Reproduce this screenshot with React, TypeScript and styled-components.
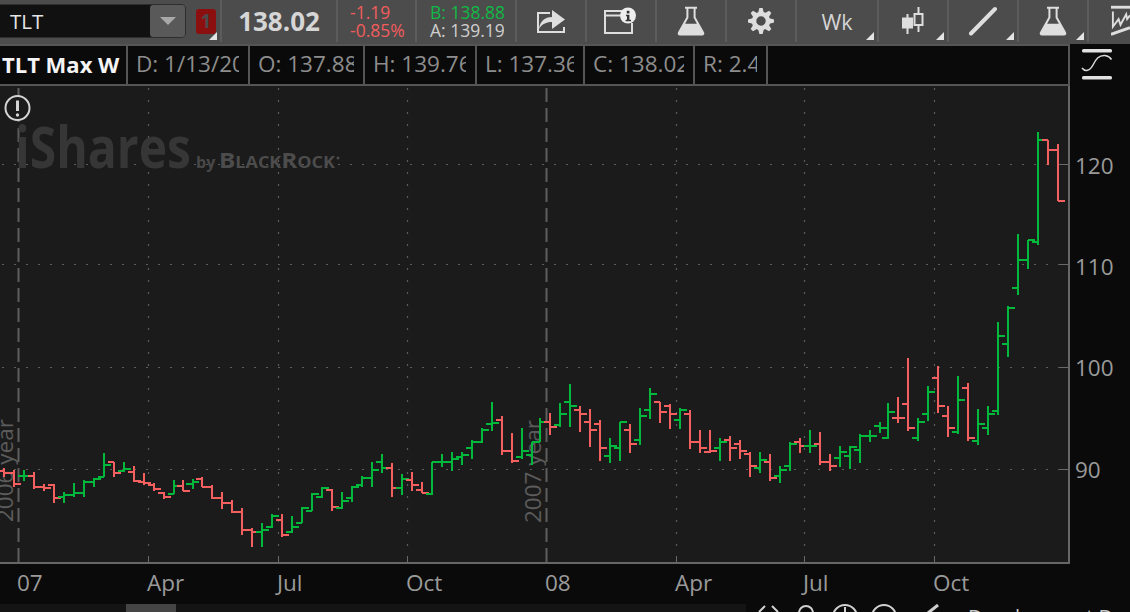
import React from 'react'
import styled, { createGlobalStyle } from 'styled-components'

const GlobalStyle = createGlobalStyle`
  html, body {
    margin: 0;
    padding: 0;
    width: 1130px;
    height: 612px;
    overflow: hidden;
    background: #0a0a0a;
    font-family: 'Open Sans', 'Noto Sans', sans-serif;
  }
`

const Page = styled.div`
  width: 1130px;
  height: 612px;
  display: flex;
  flex-direction: column;
  overflow: hidden;
`

const Toolbar = styled.div`
  height: 44px;
  flex: none;
  display: flex;
  background: #4c4c4c;
  color: #dcdcdc;
`

const ToolCell = styled.div<{ $w: number }>`
  position: relative;
  width: ${({ $w }) => $w}px;
  height: 42px;
  flex: none;
  box-sizing: border-box;
  border-right: 2px solid #5c5c5c;
  display: flex;
  align-items: center;
  justify-content: center;
  overflow: hidden;
`

const LastCell = styled(ToolCell)`
  border-right: none;
  justify-content: flex-start;
  padding-left: 22px;
`

const SymbolCell = styled(ToolCell)`
  justify-content: flex-start;
`

const SymbolBox = styled.div`
  width: 186px;
  height: 34px;
  box-sizing: border-box;
  background: #111;
  border: 1px solid #2e2e2e;
  border-left: none;
  border-radius: 0 5px 5px 0;
  display: flex;
  align-items: center;
  justify-content: space-between;
  padding-left: 10px;
  font-size: 20.5px;
  color: #e4e4e4;
`

const DropButton = styled.div`
  width: 35px;
  height: 32px;
  background: #595959;
  border-radius: 3px;
  display: flex;
  align-items: center;
  justify-content: center;
  &::after {
    content: '';
    border-left: 8px solid transparent;
    border-right: 8px solid transparent;
    border-top: 8px solid #a8a8a8;
  }
`

const AlertBadge = styled.div`
  width: 20px;
  height: 25px;
  margin-left: 10px;
  background: #8c0f0f;
  border-radius: 3px;
  color: #4a4a4a;
  font-size: 19px;
  font-weight: 700;
  line-height: 25px;
  text-align: center;
`

const Corner = styled.span`
  position: absolute;
  right: 3px;
  bottom: 2px;
  width: 0;
  height: 0;
  border-left: 8px solid transparent;
  border-bottom: 8px solid #e4e4e4;
`

const LastPrice = styled.div`
  font-size: 26px;
  font-weight: 700;
  color: #d6d6d6;
`

const QuoteStack = styled.div`
  display: flex;
  flex-direction: column;
  font-size: 17.5px;
  line-height: 18px;
  width: 100%;
  box-sizing: border-box;
  overflow: hidden;
  white-space: nowrap;
`

const ChangeStack = styled(QuoteStack)`
  padding-left: 12px;
  color: #f25c5c;
`

const BidStack = styled(QuoteStack)`
  padding-left: 13px;
  width: 87px;
  align-self: center;
  margin-right: auto;
`

const QuoteLine = styled.span<{ $color: string }>`
  color: ${({ $color }) => $color};
`

const PeriodLabel = styled.span`
  font-size: 21.5px;
  color: #d4d4d4;
`

const InfoRow = styled.div`
  height: 42px;
  flex: none;
  display: flex;
`

const InfoCells = styled.div`
  width: 1070px;
  box-sizing: border-box;
  display: flex;
  background: #0a0a0a;
  border-top: 2px solid #555;
  border-bottom: 2px solid #555;
  border-right: 2px solid #555;
`

const InfoCell = styled.div<{ $w: number; $title?: boolean }>`
  width: ${({ $w }) => $w}px;
  flex: none;
  box-sizing: border-box;
  border-right: 2px solid #555;
  padding: 0 ${({ $title }) => ($title ? 0 : 9)}px 0 ${({ $title }) => ($title ? 2 : 8)}px;
  font-size: ${({ $title }) => ($title ? 22 : 22.5)}px;
  font-weight: ${({ $title }) => ($title ? 700 : 400)};
  color: ${({ $title }) => ($title ? '#f4f4f4' : '#8d8d8d')};
  line-height: 36px;
  white-space: nowrap;
  overflow: hidden;
`

const ClippedValue = styled.span`
  display: block;
  overflow: hidden;
`

const StudyButton = styled.div`
  flex: 1;
  background: #0a0a0a;
  display: flex;
  align-items: center;
  justify-content: center;
  padding-right: 6px;
`

const ChartRow = styled.div`
  height: 478px;
  flex: none;
  display: flex;
`

const Plot = styled.svg`
  width: 1070px;
  height: 478px;
  flex: none;
  display: block;
  background: #1b1b1b;
`

const PriceAxis = styled.div`
  flex: 1;
  background: #0a0a0a;
  box-sizing: border-box;
  padding: 28.5px 0 0 5px;
  display: flex;
  flex-direction: column;
`

const PriceLabel = styled.div`
  height: 101.4px;
  flex: none;
  line-height: 101.4px;
  font-size: 22.5px;
  color: #9a9a9a;
`

const TimeAxis = styled.div`
  height: 40px;
  flex: none;
  display: flex;
  background: #0a0a0a;
  padding-left: 17px;
`

const TimeLabel = styled.div<{ $w: number }>`
  width: ${({ $w }) => $w}px;
  flex: none;
  font-size: 22.5px;
  line-height: 37px;
  color: #9a9a9a;
`

const BottomBar = styled.div`
  height: 8px;
  flex: none;
  display: flex;
  overflow: hidden;
  background: #0a0a0a;
`

const ScrollTrack = styled.div`
  width: 746px;
  flex: none;
  background: #141414;
  padding-left: 126px;
  box-sizing: border-box;
`

const ScrollThumb = styled.div`
  width: 50px;
  height: 8px;
  background: #454545;
`

const ToolIcons = styled.svg`
  width: 222px;
  height: 20px;
  flex: none;
  display: block;
`

const StatusText = styled.div`
  font-size: 20px;
  line-height: 26px;
  color: #c8c8c8;
  white-space: nowrap;
`

// bars read off the chart: [x, high, low, open, close, up] in crop coords (3x)
type Bar = [number, number, number, number, number, number]

const left: Bar[] = [
  [13, 85, 110, 92, 100, 0], [43, 90, 140, 100, 132, 0], [73, 90, 122, 108, 108, 1], [103, 95, 148, 108, 140, 0],
  [133, 132, 152, 140, 145, 0], [163, 132, 188, 135, 175, 0], [193, 155, 188, 170, 165, 1], [223, 130, 170, 165, 158, 1],
  [253, 120, 172, 158, 125, 1], [283, 115, 140, 125, 118, 1], [313, 40, 110, 110, 75, 1], [343, 65, 110, 67, 100, 0],
  [373, 65, 95, 92, 88, 1], [403, 78, 125, 95, 122, 0], [433, 100, 135, 125, 130, 0], [463, 130, 152, 135, 148, 0],
  [493, 155, 178, 160, 170, 0], [523, 120, 162, 162, 138, 1], [549, 120, 152, 138, 152, 0], [578, 118, 148, 132, 125, 1],
  [607, 112, 140, 118, 140, 0], [637, 135, 178, 140, 175, 0], [667, 155, 208, 175, 190, 0], [697, 180, 218, 190, 215, 0],
  [727, 205, 285, 215, 270, 0], [757, 265, 322, 270, 275, 0], [787, 250, 322, 275, 270, 1], [817, 222, 265, 262, 228, 1],
  [847, 222, 290, 240, 285, 0], [877, 228, 278, 275, 262, 1],
]

const middle: Bar[] = [
  [7, 380, 428, 428, 385, 1], [37, 338, 392, 392, 342, 1], [67, 322, 355, 350, 325, 1], [97, 328, 393, 330, 380, 0],
  [127, 335, 387, 385, 362, 1], [157, 318, 365, 355, 320, 1], [187, 288, 320, 315, 295, 1], [217, 245, 322, 295, 270, 1],
  [247, 222, 280, 245, 265, 1], [277, 250, 352, 265, 325, 0], [307, 282, 346, 325, 298, 1], [337, 275, 332, 300, 315, 0],
  [367, 305, 340, 330, 338, 0], [397, 245, 345, 342, 245, 1], [427, 222, 262, 247, 247, 1], [457, 215, 273, 247, 237, 1],
  [487, 215, 255, 230, 225, 1], [517, 180, 238, 205, 187, 1], [547, 143, 188, 187, 150, 1], [577, 65, 153, 132, 128, 1],
  [607, 108, 225, 120, 212, 0], [637, 160, 250, 212, 242, 0], [667, 143, 238, 232, 212, 1], [697, 185, 255, 225, 187, 1],
  [721, 113, 185, 185, 127, 1], [751, 100, 165, 127, 140, 0], [781, 70, 142, 135, 102, 1], [811, 12, 142, 67, 78, 1],
  [841, 77, 155, 90, 103, 0],
]

const later: Bar[] = [
  [1, 88, 202, 127, 150, 0], [31, 120, 243, 133, 205, 0], [61, 173, 248, 228, 198, 1], [91, 125, 243, 205, 127, 1],
  [121, 132, 220, 150, 192, 0], [151, 83, 195, 180, 108, 1], [181, 23, 118, 90, 43, 1], [211, 65, 130, 67, 97, 0],
  [241, 72, 148, 78, 103, 0], [271, 85, 148, 120, 90, 1], [301, 90, 208, 102, 187, 0], [331, 150, 220, 187, 205, 0],
  [361, 150, 220, 217, 212, 0], [391, 173, 243, 205, 187, 1], [421, 168, 243, 180, 205, 0], [451, 180, 238, 192, 212, 0],
  [481, 215, 292, 223, 258, 0], [511, 215, 280, 265, 240, 1], [541, 222, 303, 247, 295, 0], [571, 258, 310, 288, 270, 1],
  [601, 185, 273, 258, 192, 1], [631, 173, 220, 187, 198, 0], [661, 150, 220, 198, 198, 1], [691, 155, 255, 192, 247, 0],
  [721, 222, 273, 247, 258, 0], [751, 198, 262, 235, 217, 1], [781, 198, 268, 228, 200, 1], [811, 162, 250, 210, 168, 1],
  [841, 150, 185, 168, 168, 1], [871, 125, 160, 138, 145, 1],
]

const last: Bar[] = [
  [25, 850, 958, 955, 877, 1], [55, 832, 908, 895, 895, 0], [85, 713, 932, 853, 925, 0], [115, 893, 963, 955, 907, 1],
  [145, 797, 903, 883, 817, 1], [175, 737, 880, 775, 858, 0], [205, 857, 950, 888, 925, 0], [235, 767, 943, 937, 840, 1],
  [265, 790, 962, 805, 955, 0], [295, 868, 975, 962, 912, 1], [325, 857, 945, 925, 882, 1], [355, 605, 885, 872, 649, 1],
  [385, 558, 712, 673, 565, 1], [415, 342, 525, 505, 421, 1], [445, 360, 447, 420, 360, 1], [475, 35, 375, 367, 61, 1],
  [505, 60, 135, 61, 91, 0], [535, 72, 242, 91, 242, 0],
]

const toScreen = (bars: Bar[], ox: number, oy: number): Bar[] =>
  bars.map(([x, hi, lo, o, c, up]) => [ox + x / 3, oy + hi / 3, oy + lo / 3, oy + o / 3, oy + c / 3, up])

const allBars = [
  ...toScreen(left, 0, 440),
  ...toScreen(middle, 300, 380),
  ...toScreen(later, 590, 380),
  ...toScreen(last, 880, 120),
]

const PriceBars = () => (
  <g strokeWidth={2} fill="none" shapeRendering="crispEdges">
    {allBars.map(([x, hi, lo, o, c, up]) => (
      <path
        key={x}
        stroke={up ? '#00b93c' : '#f45f5f'}
        d={`M${x} ${hi}V${lo}M${x - 6.5} ${o}H${x}M${x} ${c}H${x + 6.5}`}
      />
    ))}
  </g>
)

const Flask = () => (
  <svg width="28" height="30" viewBox="0 0 28 30" fill="#dedede">
    <path d="M8 0.8h12v2h-1.4v8.4L27 26.2c.9 1.8-.2 3.3-2 3.3H3c-1.8 0-2.9-1.5-2-3.3l8.4-15V2.800H8z" />
    <path fill="#4c4c4c" d="M11.400 2.800h5.200v9l3.300 6H8.100l3.300-6z" />
  </svg>
)

const ShareIcon = () => (
  <svg width="31" height="26" viewBox="0 0 31 26" fill="none">
    <path d="M14 5H2v19h26v-5" stroke="#dedede" strokeWidth="2" />
    <path d="M3 21c1-8 6-12 13-12V2l13 9.500-13 9.500v-7c-6 0-10 2-13 7z" fill="#dedede" />
  </svg>
)

const InfoBoxIcon = () => (
  <svg width="36" height="28" viewBox="0 0 36 28" fill="none">
    <path d="M20 4H2v22h27v-10" stroke="#dedede" strokeWidth="2" />
    <path d="M2 8.500h16" stroke="#dedede" strokeWidth="2" />
    <circle cx="25" cy="8.500" r="8" fill="#eee" />
    <rect x="23.800" y="3.800" width="2.600" height="2.600" fill="#333" />
    <path d="M23 7.800h3.400v5H28v1.500h-5.400v-1.500h1.400V9.300H23z" fill="#333" />
  </svg>
)

const GearIcon = () => (
  <svg width="28" height="28" viewBox="0 0 28 28">
    <circle cx="14" cy="14" r="7" fill="none" stroke="#dedede" strokeWidth="4.500" />
    {[0, 45, 90, 135, 180, 225, 270, 315].map(a => (
      <path key={a} d="M11 6.500L12.400 1h3.200L17 6.500z" fill="#dedede" transform={`rotate(${a} 14 14)`} />
    ))}
  </svg>
)

const CandleIcon = () => (
  <svg width="22" height="28" viewBox="0 0 22 28" fill="none" stroke="#dedede">
    <path d="M5.500 7v20M16.500 0v25" strokeWidth="2" />
    <rect x="0.500" y="11" width="10" height="10" fill="#dedede" />
    <rect x="12.500" y="7" width="8" height="11" fill="#4c4c4c" strokeWidth="2" />
  </svg>
)

const LineIcon = () => (
  <svg width="30" height="30" viewBox="0 0 30 30">
    <path d="M3 27.500L27 3" stroke="#dedede" strokeWidth="4" strokeLinecap="round" />
  </svg>
)

const PatternIcon = () => (
  <svg width="20" height="32" viewBox="0 0 20 32" fill="none" stroke="#dedede">
    <path d="M0 1.500h20" strokeWidth="3" />
    <path d="M2 6v16l6-8 2 6 6-11 1 5 3-4" strokeWidth="2" />
    <path d="M0 30l20-7" strokeWidth="3" />
  </svg>
)

const StudyIcon = () => (
  <svg width="32" height="34" viewBox="0 0 32 34" fill="none">
    <rect x="1" y="1" width="30" height="3.500" rx="1.500" fill="#e2e2e2" />
    <rect x="1" y="28" width="30" height="3.500" rx="1.500" fill="#e2e2e2" />
    <path d="M1 20c3 4 8 3 11-3s6-10 12-9.500c3 .5 5 1.500 6.500 4" stroke="#d8d8d8" strokeWidth="1.500" />
  </svg>
)

const gridX = [148, 278, 407, 676, 804, 934]
const gridY = [164, 264, 367, 469]

const Chart = () => (
  <Plot viewBox="0 86 1070 478">
    {gridX.map(x => (
      <g key={x}>
        <path d={`M${x + 0.5} 88V556`} stroke="#5c5c5c" strokeWidth="1.200" strokeDasharray="2 10" />
        <path d={`M${x + 0.5} 556V562`} stroke="#6a6a6a" />
      </g>
    ))}
    {gridY.map(y => (
      <g key={y}>
        <path d={`M2 ${y + 0.5}H1060`} stroke="#5c5c5c" strokeWidth="1.200" strokeDasharray="2 10" />
        <path d={`M1060 ${y + 0.5}H1068`} stroke="#6a6a6a" />
      </g>
    ))}
    <path d="M18.500 88V562M546.500 88V562" stroke="#5e5e5e" strokeWidth="2" strokeDasharray="14 6" />

    <text x="15" y="168" fontFamily="'Open Sans', sans-serif" fontSize="58" fontWeight="700" fill="#363636" textLength="176" lengthAdjust="spacingAndGlyphs">
      iShares
    </text>
    <text x="196" y="168" fontFamily="'Open Sans', sans-serif" fontSize="16" fontWeight="700" fill="#484848">
      by
    </text>
    <text x="219" y="168" fontFamily="'Open Sans', sans-serif" fontSize="15.500" fontWeight="700" fill="#4c4c4c" textLength="116" lengthAdjust="spacingAndGlyphs">
      <tspan fontSize="21">B</tspan>LACK<tspan fontSize="21">R</tspan>OCK
    </text>
    <circle cx="338" cy="158" r="1.500" fill="#4c4c4c" />

    <text transform="translate(12.700 522) rotate(-90)" fontFamily="'Open Sans', sans-serif" fontSize="22.500" fill="#5c5c5c">
      2006 year
    </text>
    <text transform="translate(540.700 523) rotate(-90)" fontFamily="'Open Sans', sans-serif" fontSize="22.500" fill="#5c5c5c">
      2007 year
    </text>

    <circle cx="17.500" cy="108" r="12" fill="#1b1b1b" stroke="#d4d4d4" strokeWidth="2" />
    <path d="M17.500 100.500v10.500" stroke="#d4d4d4" strokeWidth="3" />
    <circle cx="17.500" cy="115" r="1.700" fill="#d4d4d4" />

    <PriceBars />

    <path d="M0 563H1069V86" fill="none" stroke="#666" strokeWidth="2" />
  </Plot>
)

const cells: [number, string][] = [
  [122, 'D: 1/13/20'],
  [115, 'O: 137.88'],
  [112, 'H: 139.76'],
  [108, 'L: 137.36'],
  [110, 'C: 138.02'],
  [73, 'R: 2.4'],
]

const App = () => (
  <Page>
    <GlobalStyle />
    <Toolbar>
      <SymbolCell $w={222}>
        <SymbolBox>
          TLT
          <DropButton />
        </SymbolBox>
        <AlertBadge>1</AlertBadge>
        <Corner />
      </SymbolCell>
      <ToolCell $w={116}>
        <LastPrice>138.02</LastPrice>
      </ToolCell>
      <ToolCell $w={79}>
        <ChangeStack>
          <span>-1.19</span>
          <span>-0.85%</span>
        </ChangeStack>
      </ToolCell>
      <ToolCell $w={100}>
        <BidStack>
          <QuoteLine $color="#10b945">B: 138.88</QuoteLine>
          <QuoteLine $color="#cfcfcf">A: 139.19</QuoteLine>
        </BidStack>
      </ToolCell>
      <ToolCell $w={70}>
        <ShareIcon />
      </ToolCell>
      <ToolCell $w={70}>
        <InfoBoxIcon />
      </ToolCell>
      <ToolCell $w={70}>
        <Flask />
      </ToolCell>
      <ToolCell $w={70}>
        <GearIcon />
      </ToolCell>
      <ToolCell $w={82}>
        <PeriodLabel>Wk</PeriodLabel>
        <Corner />
      </ToolCell>
      <ToolCell $w={70}>
        <CandleIcon />
        <Corner />
      </ToolCell>
      <ToolCell $w={70}>
        <LineIcon />
        <Corner />
      </ToolCell>
      <ToolCell $w={70}>
        <Flask />
        <Corner />
      </ToolCell>
      <LastCell $w={41}>
        <PatternIcon />
      </LastCell>
    </Toolbar>

    <InfoRow>
      <InfoCells>
        <InfoCell $w={128} $title>
          TLT Max W
        </InfoCell>
        {cells.map(([w, value]) => (
          <InfoCell key={value} $w={w}>
            <ClippedValue>{value}</ClippedValue>
          </InfoCell>
        ))}
      </InfoCells>
      <StudyButton>
        <StudyIcon />
      </StudyButton>
    </InfoRow>

    <ChartRow>
      <Chart />
      <PriceAxis>
        <PriceLabel>120</PriceLabel>
        <PriceLabel>110</PriceLabel>
        <PriceLabel>100</PriceLabel>
        <PriceLabel>90</PriceLabel>
      </PriceAxis>
    </ChartRow>

    <TimeAxis>
      <TimeLabel $w={130}>07</TimeLabel>
      <TimeLabel $w={130}>Apr</TimeLabel>
      <TimeLabel $w={129}>Jul</TimeLabel>
      <TimeLabel $w={139}>Oct</TimeLabel>
      <TimeLabel $w={130}>08</TimeLabel>
      <TimeLabel $w={128}>Apr</TimeLabel>
      <TimeLabel $w={130}>Jul</TimeLabel>
      <TimeLabel $w={100}>Oct</TimeLabel>
    </TimeAxis>

    <BottomBar>
      <ScrollTrack>
        <ScrollThumb />
      </ScrollTrack>
      <ToolIcons viewBox="746 604 222 20" fill="none" stroke="#d0d0d0" strokeWidth="2">
        <path d="M765 606l-6 6M772 606l6 6" />
        <circle cx="806" cy="613" r="7" />
        <circle cx="845" cy="617" r="12" />
        <path d="M845 607v8" />
        <circle cx="884" cy="617" r="12" />
        <path d="M938 605l-10 8" strokeWidth="3" />
      </ToolIcons>
      <StatusText>Development D</StatusText>
    </BottomBar>
  </Page>
)

export default App
